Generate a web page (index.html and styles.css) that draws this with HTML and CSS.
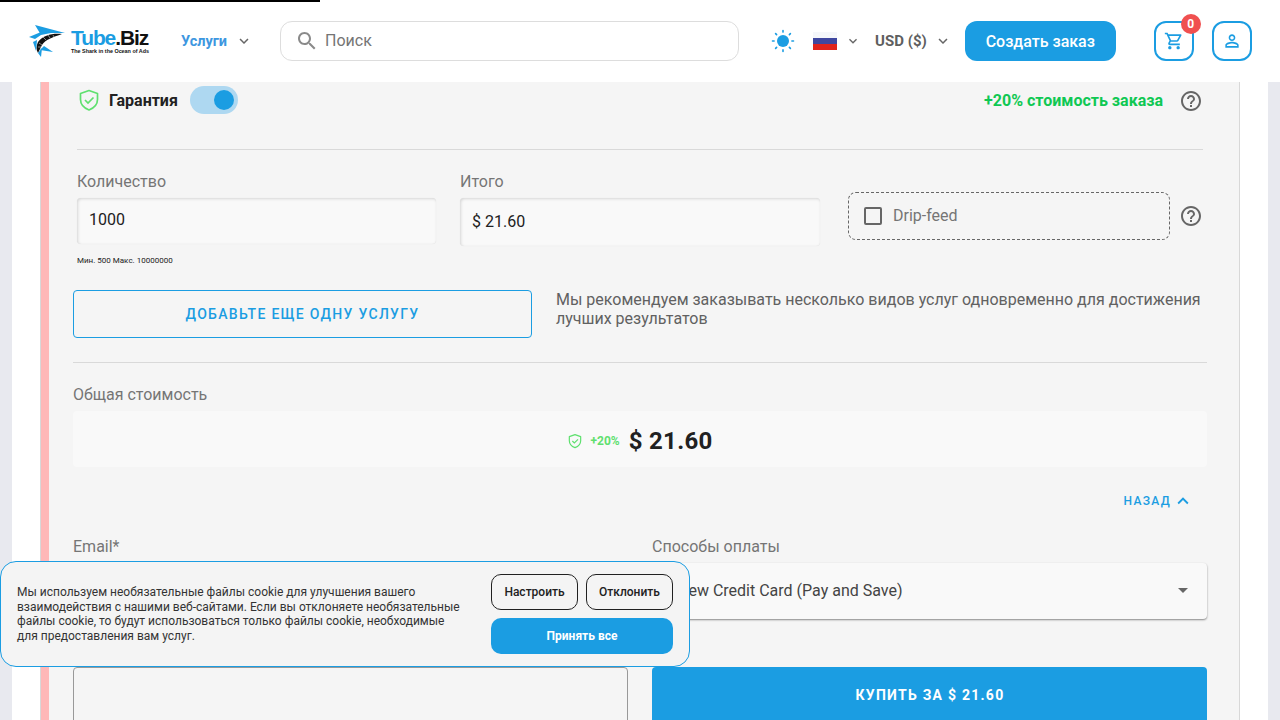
FILE: index.html
```html
<!DOCTYPE html>
<html lang="ru">
<head>
<meta charset="UTF-8">
<meta name="viewport" content="width=device-width, initial-scale=1.0">
<title>Tube.Biz</title>
<link rel="stylesheet" href="styles.css">
</head>
<body>

<div class="progress"></div>

<header class="header">
    <a class="logo">
        <svg class="logo-mark" viewBox="0 0 40 32" width="40" height="32">
            <polygon points="6,0 36,8 22,8 12,10" fill="#1b9de2"/>
            <polygon points="0,12 12,7 12,10 6,14" fill="#1b9de2"/>
            <path d="M33 9C24 8 14 10 9 17 7 21 7 25 9 28L13 20C16 15 24 12 33 9z" fill="#111"/>
            <path d="M14 12l3 3M19 10l2 3M24 10l1 2M10 18l3 2M9 22l3 0" stroke="#fff" stroke-width="0.500" fill="none"/>
            <polygon points="11,25 24,27 15,21" fill="#1b9de2"/>
            <polygon points="9,28 12,32 13,23" fill="#1b9de2"/>
            <polygon points="4,17 8,15 7,26" fill="#1b9de2"/>
        </svg>
        <span class="logo-text">
            <span class="logo-name"><span class="logo-blue">Tube</span>.Biz</span>
            <span class="logo-tag">The Shark in the Ocean of Ads</span>
        </span>
    </a>

    <a class="services">Услуги</a>
    <svg class="chevron chevron-services" viewBox="0 0 24 24"><path d="M16.59 8.59 12 13.17 7.41 8.59 6 10l6 6 6-6z"/></svg>

    <div class="search">
        <svg class="search-icon" viewBox="0 0 24 24"><path d="M15.5 14h-.79l-.28-.27C15.41 12.59 16 11.11 16 9.5 16 5.91 13.09 3 9.5 3S3 5.91 3 9.5 5.91 16 9.5 16c1.61 0 3.09-.59 4.23-1.57l.27.28v.79l5 4.99L20.49 19l-4.99-5zm-6 0C7.01 14 5 11.99 5 9.5S7.01 5 9.5 5 14 7.01 14 9.5 11.99 14 9.5 14z"/></svg>
        <span>Поиск</span>
    </div>

    <svg class="sun" viewBox="0 0 24 24" width="24" height="24">
        <circle cx="12" cy="12" r="6" fill="#1b9de2"/>
        <g stroke="#1b9de2" stroke-width="1.6" stroke-linecap="round">
            <path d="M12 1.500v1.600M12 20.900v1.600M1.500 12h1.600M20.900 12h1.600M4.600 4.600l1 1M18.400 18.400l1 1M4.600 19.400l1-1M18.400 5.600l1-1"/>
        </g>
    </svg>
    <div class="flag"><i class="flag-white"></i><i class="flag-blue"></i><i class="flag-red"></i></div>
    <svg class="chevron chevron-flag" viewBox="0 0 24 24"><path d="M16.59 8.59 12 13.17 7.41 8.59 6 10l6 6 6-6z"/></svg>
    <span class="currency">USD ($)</span>
    <svg class="chevron chevron-currency" viewBox="0 0 24 24"><path d="M16.59 8.59 12 13.17 7.41 8.59 6 10l6 6 6-6z"/></svg>

    <a class="create-btn">Создать заказ</a>

    <a class="icon-btn cart">
        <svg viewBox="0 0 24 24" width="20" height="20"><path d="M15.55 13c.75 0 1.41-.41 1.75-1.03l3.58-6.49c.37-.66-.11-1.48-.87-1.48H5.21l-.94-2H1v2h2l3.6 7.59-1.35 2.44C4.52 15.37 5.48 17 7 17h12v-2H7l1.1-2h7.45zM6.16 6h12.15l-2.76 5H8.53L6.16 6zM7 18c-1.1 0-1.99.9-1.99 2S5.9 22 7 22s2-.9 2-2-.9-2-2-2zm10 0c-1.1 0-1.99.9-1.99 2s.89 2 1.99 2 2-.9 2-2-.9-2-2-2z"/></svg>
        <span class="badge">0</span>
    </a>
    <a class="icon-btn user">
        <svg viewBox="0 0 24 24" width="20" height="20"><path d="M12 5.9c1.16 0 2.1.94 2.1 2.1s-.94 2.1-2.1 2.1S9.9 9.16 9.9 8s.94-2.1 2.1-2.1m0 9c2.97 0 6.1 1.46 6.1 2.1v1.1H5.9V17c0-.64 3.13-2.1 6.1-2.1M12 4C9.79 4 8 5.79 8 8s1.79 4 4 4 4-1.79 4-4-1.79-4-4-4zm0 9c-2.67 0-8 1.34-8 4v3h16v-3c0-2.66-5.33-4-8-4z"/></svg>
    </a>
</header>

<main class="page">
    <section class="card">
        <div class="inner">
            <div class="guarantee">
                <svg class="shield" viewBox="0 0 24 24" width="24" height="24">
                    <path d="M12 2.500 20.500 5.500v6c0 5-3.500 8.500-8.500 10.500C7 20 3.500 16.500 3.500 11.500v-6z" fill="none" stroke="#5fe06f" stroke-width="1.700" stroke-linejoin="round"/>
                    <path d="M8 12l3 3 5.500-5.500" fill="none" stroke="#5fe06f" stroke-width="1.700"/>
                </svg>
                <strong class="guarantee-label">Гарантия</strong>
                <span class="toggle"><i class="toggle-knob"></i></span>
                <span class="guarantee-price">+20% стоимость заказа</span>
                <svg class="help help-guarantee" viewBox="0 0 24 24"><path d="M11 18h2v-2h-2v2zm1-16C6.48 2 2 6.48 2 12s4.48 10 10 10 10-4.48 10-10S17.52 2 12 2zm0 18c-4.41 0-8-3.59-8-8s3.59-8 8-8 8 3.59 8 8-3.59 8-8 8zm0-14c-2.21 0-4 1.79-4 4h2c0-1.1.9-2 2-2s2 .9 2 2c0 2-3 1.75-3 5h2c0-2.25 3-2.5 3-5 0-2.21-1.790-4-4-4z"/></svg>
            </div>

            <hr class="rule rule-top">

            <div class="quantity-row">
                <div class="field-qty">
                    <label class="label">Количество</label>
                    <div class="input input-qty">1000</div>
                </div>
                <div class="field-total">
                    <label class="label">Итого</label>
                    <div class="input input-total">$ 21.60</div>
                </div>
                <div class="drip">
                    <i class="checkbox"></i>
                    <span>Drip-feed</span>
                </div>
                <svg class="help help-drip" viewBox="0 0 24 24"><path d="M11 18h2v-2h-2v2zm1-16C6.48 2 2 6.48 2 12s4.48 10 10 10 10-4.48 10-10S17.52 2 12 2zm0 18c-4.41 0-8-3.59-8-8s3.59-8 8-8 8 3.59 8 8-3.59 8-8 8zm0-14c-2.21 0-4 1.79-4 4h2c0-1.1.9-2 2-2s2 .9 2 2c0 2-3 1.75-3 5h2c0-2.25 3-2.5 3-5 0-2.21-1.790-4-4-4z"/></svg>
            </div>
            <p class="limits">Мин. 500 Макс. 10000000</p>
        </div>

        <div class="add-row">
            <a class="add-btn">ДОБАВЬТЕ ЕЩЕ ОДНУ УСЛУГУ</a>
            <p class="add-note">Мы рекомендуем заказывать несколько видов услуг одновременно для достижения лучших результатов</p>
        </div>

        <hr class="rule rule-total">

        <label class="label label-sum">Общая стоимость</label>
        <div class="sum">
            <svg viewBox="0 0 24 24" width="16" height="16">
                <path d="M12 2.500 20.500 5.500v6c0 5-3.500 8.500-8.500 10.500C7 20 3.500 16.500 3.500 11.500v-6z" fill="none" stroke="#5fe06f" stroke-width="1.800" stroke-linejoin="round"/>
                <path d="M8 12l3 3 5.500-5.500" fill="none" stroke="#5fe06f" stroke-width="1.800"/>
            </svg>
            <span class="sum-extra">+20%</span>
            <strong class="sum-value">$ 21.60</strong>
        </div>

        <div class="back">
            <span>НАЗАД</span>
            <svg viewBox="0 0 24 24" width="22" height="22"><path d="M12 8l-6 6 1.410 1.410L12 10.830l4.590 4.580L18 14z"/></svg>
        </div>

        <div class="pay-grid">
            <div>
                <label class="label">Email*</label>
                <div class="input input-email"></div>
            </div>
            <div>
                <label class="label">Способы оплаты</label>
                <div class="select">
                    <span>New Credit Card (Pay and Save)</span>
                    <i class="select-arrow"></i>
                </div>
            </div>
            <div class="notes"></div>
            <a class="buy-btn">КУПИТЬ ЗА $ 21.60</a>
        </div>
    </section>
</main>

<aside class="cookie">
    <p class="cookie-text">Мы используем необязательные файлы cookie для улучшения вашего взаимодействия с нашими веб-сайтами. Если вы отклоняете необязательные файлы cookie, то будут использоваться только файлы cookie, необходимые для предоставления вам услуг.</p>
    <div class="cookie-actions">
        <a class="cookie-btn">Настроить</a>
        <a class="cookie-btn">Отклонить</a>
        <a class="cookie-btn cookie-accept">Принять все</a>
    </div>
</aside>

</body>
</html>
```

FILE: styles.css
```css
* {
    box-sizing: border-box;
}
html, body {
    height: 720px;
    overflow: hidden;
}
body {
    margin: 0;
    font-family: Roboto, "Noto Sans", sans-serif;
    background-color: #e8e9ef;
    color: #212121;
}
p {
    margin: 0;
}

/* top loading line */
.progress {
    position: absolute;
    top: 0;
    left: 0;
    width: 320px;
    height: 2px;
    background-color: #000;
    z-index: 5;
}

/* header */
.header {
    display: flex;
    align-items: center;
    height: 82px;
    padding-left: 29px;
    background-color: #fff;
}
.logo {
    display: flex;
    align-items: center;
    width: 120px;
}
.logo-mark {
    flex: none;
    margin-right: 2px;
}
.logo-text {
    display: flex;
    flex-direction: column;
}
.logo-name {
    font-family: "Liberation Sans", sans-serif;
    font-size: 21px;
    line-height: 20px;
    font-weight: 700;
    letter-spacing: -1.1px;
    color: #111;
}
.logo-blue {
    color: #1b9de2;
}
.logo-tag {
    font-family: "Liberation Sans", sans-serif;
    font-size: 5.400px;
    line-height: 6px;
    font-weight: 700;
    color: #111;
    white-space: nowrap;
}
.services {
    margin-left: 32px;
    font-size: 14.500px;
    font-weight: 700;
    color: #3d97e0;
}
.chevron {
    width: 18px;
    height: 18px;
    fill: #666;
    flex: none;
}
.chevron-services {
    margin-left: 8px;
}
.search {
    display: flex;
    align-items: center;
    width: 459px;
    height: 40px;
    margin-left: 27px;
    padding: 0 0 1px 14px;
    border: 1px solid #ddd;
    border-radius: 12px;
    font-size: 16px;
    color: #757575;
}
.search-icon {
    width: 24px;
    height: 24px;
    margin-right: 6px;
    fill: #8a8a8a;
}
.sun {
    margin-left: 32px;
}
.flag {
    display: flex;
    flex-direction: column;
    width: 24px;
    height: 18px;
    margin-left: 18px;
}
.flag i {
    flex: 1;
}
.flag-white {
    background-color: #f5f7fa;
}
.flag-blue {
    background-color: #3f479f;
}
.flag-red {
    background-color: #e0241c;
}
.chevron-flag {
    width: 16px;
    height: 16px;
    margin-left: 8px;
}
.currency {
    margin-left: 14px;
    font-size: 15px;
    font-weight: 700;
    color: #5f5f5f;
}
.chevron-currency {
    margin-left: 7px;
}
.create-btn {
    display: flex;
    align-items: center;
    justify-content: center;
    width: 151px;
    height: 40px;
    margin-left: 13px;
    border-radius: 12px;
    background-color: #1b9de2;
    color: #fff;
    font-size: 16px;
    font-weight: 500;
}
.icon-btn {
    position: relative;
    display: flex;
    align-items: center;
    justify-content: center;
    width: 40px;
    height: 40px;
    border: 2px solid #1b9de2;
    border-radius: 12px;
    fill: #1b9de2;
}
.cart {
    margin-left: 38px;
}
.user {
    margin-left: 18px;
}
.badge {
    position: absolute;
    top: -9px;
    right: -9px;
    width: 20px;
    height: 20px;
    border-radius: 50%;
    background-color: #f05050;
    color: #fff;
    font-size: 12px;
    font-weight: 700;
    line-height: 20px;
    text-align: center;
}

/* page */
.page {
    margin: 0 12px;
    padding: 0 28px 0 29px;
    height: 638px;
    overflow: hidden;
    background-color: #fff;
}
.card {
    height: 900px;
    padding: 0 32px 0 24px;
    border-left: 8px solid #ffb8b8;
    border-right: 1px solid #d8d8d8;
    box-shadow: -1px 0 0 #d8d8d8;
    background-color: #f5f5f5;
}
.inner {
    margin: 0 4px;
}
.guarantee {
    display: flex;
    align-items: center;
    height: 36px;
}
.shield {
    flex: none;
}
.guarantee-label {
    margin-left: 8px;
    font-size: 16px;
    font-weight: 700;
}
.toggle {
    display: flex;
    align-items: center;
    justify-content: flex-end;
    width: 48px;
    height: 28px;
    margin-left: 12px;
    padding-right: 4px;
    border-radius: 14px;
    background-color: #aed8f1;
}
.toggle-knob {
    width: 20px;
    height: 20px;
    border-radius: 50%;
    background-color: #1b9de2;
}
.guarantee-price {
    margin-left: auto;
    font-size: 16px;
    font-weight: 700;
    color: #0fc853;
}
.help {
    width: 24px;
    height: 24px;
    fill: #666;
    flex: none;
}
.help-guarantee {
    margin: 2px 0 0 16px;
}
.rule {
    height: 1px;
    margin: 0;
    border: 0;
    background-color: #d9d9d9;
}
.rule-top {
    margin-top: 31px;
}
.quantity-row {
    display: flex;
    align-items: flex-start;
    margin-top: 22px;
}
.label {
    display: block;
    font-size: 16px;
    line-height: 19px;
    color: #757575;
}
.field-qty {
    width: 359px;
}
.field-total {
    width: 360px;
    margin-left: 24px;
}
.input {
    height: 46px;
    margin-top: 7px;
    padding-left: 12px;
    border-radius: 4px;
    background-color: #f9f9f9;
    box-shadow: inset 1px 1px 3px rgba(0, 0, 0, 0.14), 0 0 1px rgba(0, 0, 0, 0.1);
    font-size: 16px;
    line-height: 44px;
}
.input-total {
    height: 48px;
    line-height: 48px;
}
.drip {
    display: flex;
    align-items: center;
    width: 322px;
    height: 48px;
    margin-top: 20px;
    margin-left: 28px;
    padding: 0 0 1px 15px;
    border: 1px dashed #666;
    border-radius: 8px;
    font-size: 16px;
    color: #757575;
}
.checkbox {
    width: 18px;
    height: 18px;
    margin-right: 11px;
    border: 2px solid #666;
    border-radius: 2px;
}
.help-drip {
    margin-top: 32px;
    margin-left: 9px;
}
.limits {
    margin-top: 10px;
    font-size: 8px;
    line-height: 10px;
    color: #212121;
}
.add-row {
    display: flex;
    align-items: flex-start;
    margin-top: 24px;
}
.add-btn {
    display: flex;
    align-items: center;
    justify-content: center;
    flex: none;
    width: 459px;
    height: 48px;
    border: 1px solid #1b9de2;
    border-radius: 4px;
    color: #1b9de2;
    font-size: 14px;
    font-weight: 500;
    letter-spacing: 1.300px;
}
.add-note {
    margin-left: 24px;
    font-size: 16px;
    line-height: 19px;
    color: #616161;
}
.rule-total {
    margin-top: 24px;
}
.label-sum {
    margin-top: 22px;
}
.sum {
    display: flex;
    align-items: center;
    justify-content: center;
    height: 56px;
    margin-top: 7px;
    padding-top: 4px;
    border-radius: 4px;
    background-color: #f9f9f9;
}
.sum-extra {
    margin-left: 7px;
    font-size: 12px;
    font-weight: 700;
    color: #5fe06f;
}
.sum-value {
    margin-left: 9px;
    font-size: 24px;
    font-weight: 700;
    letter-spacing: 0.300px;
}
.back {
    display: flex;
    align-items: center;
    justify-content: flex-end;
    height: 20px;
    margin-top: 24px;
    padding-right: 13px;
    color: #1b9de2;
    fill: #1b9de2;
    font-size: 12px;
    font-weight: 500;
    letter-spacing: 1.300px;
}
.back svg {
    margin-left: 1px;
}
.pay-grid {
    display: grid;
    grid-template-columns: 555px 555px;
    column-gap: 24px;
    row-gap: 48px;
    margin-top: 26px;
}
.input-email {
    height: 56px;
    margin-top: 7px;
}
.select {
    display: flex;
    align-items: center;
    justify-content: space-between;
    height: 56px;
    margin-top: 7px;
    padding: 0 19px 2px 25px;
    border-radius: 4px;
    background-color: #f9f9f9;
    box-shadow: 0 1px 2px rgba(0, 0, 0, 0.45);
    font-size: 16px;
    color: #444;
}
.select-arrow {
    width: 0;
    height: 0;
    border-left: 5px solid transparent;
    border-right: 5px solid transparent;
    border-top: 5px solid #666;
}
.notes {
    height: 120px;
    border: 1px solid #999;
    border-radius: 4px;
}
.buy-btn {
    display: flex;
    align-items: center;
    justify-content: center;
    height: 56px;
    padding-left: 1px;
    border-radius: 4px;
    background-color: #1b9de2;
    color: #fff;
    font-size: 14px;
    font-weight: 700;
    letter-spacing: 1.250px;
}

/* cookie banner */
.cookie {
    position: absolute;
    left: 0;
    top: 561px;
    display: flex;
    align-items: center;
    justify-content: space-between;
    width: 690px;
    height: 106px;
    padding: 0 16px;
    border: 1px solid #1b9de2;
    border-radius: 16px;
    background-color: #f4f4f4;
}
.cookie-text {
    width: 450px;
    font-size: 12px;
    line-height: 14.500px;
    color: #333;
}
.cookie-actions {
    display: grid;
    grid-template-columns: 87px 87px;
    column-gap: 8px;
    row-gap: 8px;
    flex: none;
}
.cookie-btn {
    display: flex;
    align-items: center;
    justify-content: center;
    height: 36px;
    border: 1px solid #212121;
    border-radius: 10px;
    font-size: 12px;
    font-weight: 500;
}
.cookie-accept {
    grid-column: 1 / 3;
    border: 0;
    background-color: #1b9de2;
    color: #fff;
    font-weight: 700;
}
```
